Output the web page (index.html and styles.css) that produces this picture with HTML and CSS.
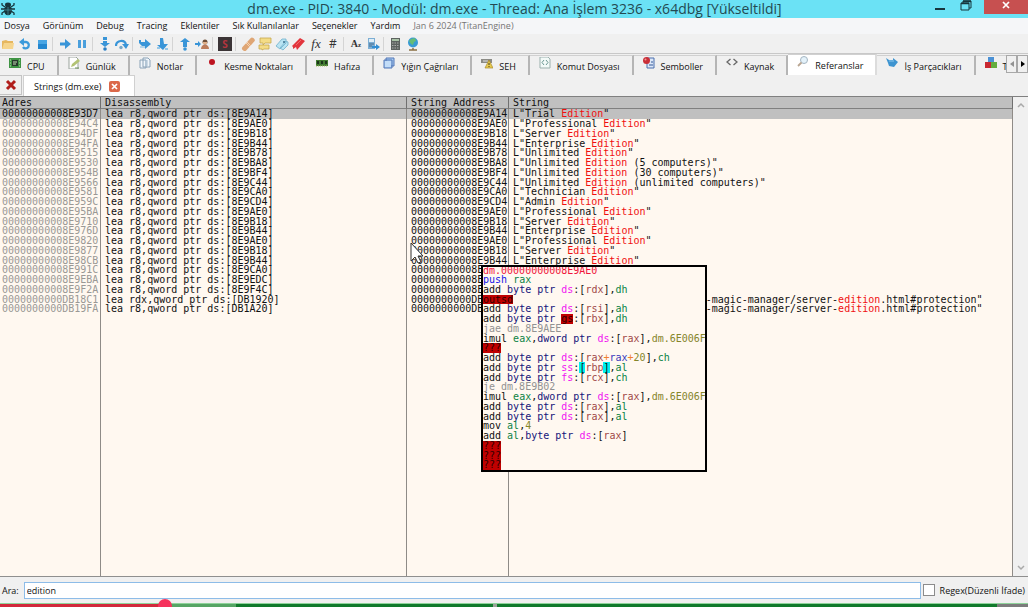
FILE: index.html
```
<!DOCTYPE html>
<html lang="tr">

<head>
    <meta charset="UTF-8">
    <meta name="viewport" content="width=device-width, initial-scale=1.0">
    <title>x64dbg</title>
    <link rel="stylesheet" href="styles.css">
</head>

<body>

    <!-- Title bar -->
    <header class="titlebar">
        <svg class="bug" viewBox="0 0 16 14"><g fill="none" stroke="#17363d" stroke-width="1.3"><path d="M5 5L2 3V1M11 5l3-2V1M5 7H1M11 7h4M5 9l-3 2v2M11 9l3 2v2"/></g><ellipse cx="8" cy="3" rx="3" ry="2.4" fill="#17363d"/><ellipse cx="8" cy="8.5" rx="4" ry="4.8" fill="#17363d"/><path d="M8 5v8M4 8h8" stroke="#4b96a5" stroke-width=".7"/></svg>
        <h1>dm.exe - PID: 3840 - Modül: dm.exe - Thread: Ana İşlem 3236 - x64dbg [Yükseltildi]</h1>
        <div class="window-buttons">
            <button aria-label="Simge durumuna küçült"><svg width="12" height="12"><path d="M1 9h10" stroke="#17363d" stroke-width="2"/></svg></button>
            <button aria-label="Geri yükle"><svg width="12" height="12"><path d="M3 3V1h8v7H9M3 1h8" fill="none" stroke="#17363d"/><path d="M1 3h8v7H1z" fill="none" stroke="#17363d"/><path d="M1 3.5h8M3 1.5h8" stroke="#17363d" stroke-width="1.5"/></svg></button>
            <button class="close" aria-label="Kapat"><svg width="10" height="10"><path d="M2 2l6 6M8 2L2 8" stroke="#fff" stroke-width="1.7"/></svg></button>
        </div>
    </header>

    <nav class="menubar">
        <button>Dosya</button>
        <button>Görünüm</button>
        <button>Debug</button>
        <button>Tracing</button>
        <button>Eklentiler</button>
        <button>Sık Kullanılanlar</button>
        <button>Seçenekler</button>
        <button>Yardım</button>
        <span>Jan 6 2024 (TitanEngine)</span>
    </nav>

    <!-- Toolbar -->
    <div class="toolbar">
        <button aria-label="Aç"><svg viewBox="0 0 14 14"><path d="M1 12V4l4-1 2 1h5v8z" fill="#e6b75f"/><path d="M1 12l2-6h10l-1 6z" fill="#f6d58c"/></svg></button>
        <button aria-label="Yeniden başlat"><svg viewBox="0 0 14 14"><path d="M4 5h4a3.2 3.2 0 1 1-3 5" fill="none" stroke="#3b9adb" stroke-width="2.4"/><path d="M1 5l5-4v8z" fill="#3b9adb"/></svg></button>
        <button aria-label="Durdur"><svg viewBox="0 0 14 14"><path d="M3 3h9v9H3z" fill="#2487cf"/><path d="M3 3h9v4H3z" fill="#48a5e3"/></svg></button>
        <i></i>
        <button aria-label="Çalıştır"><svg viewBox="0 0 14 14"><path d="M2 5.500h5V2l6 5-6 5V8.500H2z" fill="#3995d8"/></svg></button>
        <button aria-label="Duraklat"><svg viewBox="0 0 14 14"><path d="M3 3h3v8H3zM8 3h3v8H8z" fill="#4a9fdc"/></svg></button>
        <i></i>
        <button aria-label="İçine gir"><svg viewBox="0 0 14 14"><path d="M5 0h4v3H5zM5 4h4v2h3l-5 4-5-4h3z" fill="#3995d8"/><circle cx="7" cy="12" r="1.800" fill="#2a7fc4"/></svg></button>
        <button aria-label="Üzerinden geç"><svg viewBox="0 0 14 14"><path d="M1 9c0-6 9-7 10-1" fill="none" stroke="#3995d8" stroke-width="2.200"/><path d="M7 7h7l-3 5z" fill="#3995d8"/><circle cx="6" cy="10.500" r="1.700" fill="#78a8c8"/></svg></button>
        <i></i>
        <button aria-label="İz içine"><svg viewBox="0 0 14 14"><path d="M1 3h2v2h4V2l6 5-6 5V9H4L1 6z" fill="#3995d8"/><path d="M2 10h5" stroke="#78b8e4"/></svg></button>
        <button aria-label="İz üzerinden"><svg viewBox="0 0 14 14"><path d="M5 1h3l1 6h4l-5 6-6-5h3z" fill="#3995d8"/><path d="M2 11h3M10 12h3" stroke="#78b8e4" stroke-width="1.500"/></svg></button>
        <i></i>
        <button aria-label="Dönüşe kadar"><svg viewBox="0 0 14 14"><path d="M7 1l5 4H9v5H5V5H2z" fill="#3995d8"/><circle cx="7" cy="12" r="1.800" fill="#3995d8"/></svg></button>
        <button aria-label="Kullanıcı koduna"><svg viewBox="0 0 14 14"><path d="M0 6h3V4l3 3-3 3V8H0z" fill="#3995d8"/><circle cx="10" cy="5" r="2.500" fill="#6d4d37"/><path d="M8 5h4v2H8z" fill="#e0af87"/><path d="M6 12c0-6 8-6 8 0z" fill="#bd7c5a"/></svg></button>
        <i></i>
        <button class="scylla" aria-label="Scylla">S</button>
        <i></i>
        <button aria-label="Yamalar"><svg viewBox="0 0 14 14"><rect x="-1" y="5" width="16" height="5" rx="2" transform="rotate(-48 7 7)" fill="#dfa675"/><path d="M5 6l4 4M6 5l4 4" stroke="#f5d2b0"/></svg></button>
        <button aria-label="Yorumlar"><svg viewBox="0 0 14 14"><path d="M2 1h11v5H7L5 8V6H2zM1 8h10v4H6l-2 1v-1H1z" fill="#f4dc86" stroke="#c7a74f" stroke-width=".8"/></svg></button>
        <button aria-label="Etiketler"><svg viewBox="0 0 14 14"><path d="M1 9l6-7h4v4l-6 6zM5 11l6-7 2 1v3l-5 5z" fill="#b9e4f3" stroke="#6fb0cb" stroke-width=".8"/><circle cx="9" cy="5" r="1" fill="#3a6f8c"/></svg></button>
        <button aria-label="Yer imleri"><svg viewBox="0 0 14 14"><path d="M0 9l8-8 5 3-8 9-1-3-3 2v-2z" fill="#e2353d"/><path d="M4 8l5-5" stroke="#f06a6a"/></svg></button>
        <button class="fx" aria-label="Fonksiyonlar">fx</button>
        <button class="hash" aria-label="Değişkenler">#</button>
        <i></i>
        <button class="az" aria-label="Dizeler">A<small>z</small></button>
        <button aria-label="Modüller arası çağrılar"><svg viewBox="0 0 14 14"><path d="M2 1h7v11H2z" fill="#7caed4"/><path d="M3 2h5v3H3z" fill="#deedf7"/><path d="M3 7h5M3 9h3" stroke="#466c8e"/><path d="M6 9h4V7l4 3-4 3v-2H6z" fill="#328ed3"/></svg></button>
        <i></i>
        <button aria-label="Hesap makinesi"><svg viewBox="0 0 14 14"><path d="M2 1h9v12H2z" fill="#5c625f"/><path d="M3 2h7v2H3z" fill="#a8c1a5"/><path d="M3 6h7M3 8.500h7M3 11h7" stroke="#aaa" stroke-dasharray="1.500 1"/></svg></button>
        <button aria-label="Güncelle"><svg viewBox="0 0 14 14"><circle cx="7" cy="5.500" r="5" fill="#399bd4"/><path d="M5 2l4-1 1 3-2 1-1 3-2-1-2-3z" fill="#65bd77"/><path d="M7 11v2M3 13h8" stroke="#8b7044" stroke-width="1.500"/></svg></button>
    </div>

    <!-- View tabs -->
    <div class="tabs" role="tablist">
        <button class="tab" role="tab"><svg viewBox="0 0 12 12"><path d="M0 1h12v10H0z" fill="#3f9444"/><path d="M3 3h6v6H3z" fill="#26382b"/><path d="M1 3h1M1 6h1M1 9h1M10 3h1M10 6h1M10 9h1M4 5h4M4 7h3" stroke="#c6dfb8"/></svg>CPU</button>
        <button class="tab" role="tab"><svg viewBox="0 0 12 12"><path d="M1 0h7l2 2v10H1z" fill="#fff" stroke="#9ba49d"/><path d="M3 10l1-3 6-5 2 2-6 5z" fill="#b3c374"/><path d="M7 11h4" stroke="#6b8e54"/></svg>Günlük</button>
        <button class="tab" role="tab"><svg viewBox="0 0 12 12"><path d="M1 3h6v8H1zM4 1h5l2 2v7H4z" fill="#f1f6fb" stroke="#8aa2b7"/><path d="M6 4h3M6 6h3M6 8h3" stroke="#a8bfd2"/></svg>Notlar</button>
        <button class="tab" role="tab"><svg viewBox="0 0 12 12"><circle cx="6" cy="5" r="3" fill="#bd1420"/></svg>Kesme Noktaları</button>
        <button class="tab" role="tab"><svg viewBox="0 0 12 12"><path d="M0 3h12v6H0z" fill="#417b32"/><path d="M1 4h2v3H1zM5 4h2v3H5zM9 4h2v3H9z" fill="#1c351a"/><path d="M0 9h12" stroke="#a7ba63" stroke-dasharray="1 1"/></svg>Hafıza</button>
        <button class="tab" role="tab"><svg viewBox="0 0 12 12"><path d="M3 1h8v8H3zM1 3h8v8H1z" fill="#a8ccf2" stroke="#5376b6"/><path d="M2 4h6v6H2z" fill="#c3ddf8"/></svg>Yığın Çağrıları</button>
        <button class="tab" role="tab"><svg viewBox="0 0 12 12"><path d="M0 2h11v4H0z" fill="#8b8b85"/><path d="M2 4h5" stroke="#ddd"/><path d="M8 3l4 8H4z" fill="#e7ca4d" stroke="#a98a2c" stroke-width=".7"/><path d="M8 6v2M8 9v1" stroke="#4b401c"/></svg>SEH</button>
        <button class="tab" role="tab"><svg viewBox="0 0 12 12"><path d="M1 0h8l2 2v9H1z" fill="#f3faf8" stroke="#9bb0ad"/><path d="M5 3L3 5.500 5 8M7 3l2 2.500L7 8" fill="none" stroke="#6c9893"/></svg>Komut Dosyası</button>
        <button class="tab" role="tab"><svg viewBox="0 0 12 12"><path d="M4 1h7v10H4z" fill="#dce7f8" stroke="#4b6fad"/><path d="M6 8h4M8 5h2" stroke="#335998"/><circle cx="3.500" cy="3.500" r="3.500" fill="#c92e37"/><circle cx="2.500" cy="2.500" r="1" fill="#ed9696"/></svg>Semboller</button>
        <button class="tab" role="tab"><svg viewBox="0 0 12 12"><path d="M4.500 2L1 5l3.500 3M7.500 2L11 5 7.500 8" fill="none" stroke="#686868" stroke-width="1.300"/></svg>Kaynak</button>
        <button class="tab active" role="tab" aria-selected="true"><svg viewBox="0 0 12 12"><circle cx="7" cy="4" r="3.500" fill="#e4f2fa" stroke="#a4b5c2"/><path d="M4.500 6.500L1 10" stroke="#b9a591" stroke-width="1.800"/></svg>Referanslar</button>
        <button class="tab" role="tab"><svg viewBox="0 0 12 12"><path d="M0 1l3 2h4V1l5 4-4 5-5-1-1-3z" fill="#3e94d0"/><path d="M3 4h5" stroke="#8cc8ee"/></svg>İş Parçacıkları</button>
        <button class="tab last" role="tab"><svg viewBox="0 0 12 12"><path d="M3 0h6v5H3z" fill="#4c91d5"/><path d="M0 5h6v6H0z" fill="#c92931"/><path d="M6 5h6v6H6z" fill="#65ad3e"/></svg>T</button>
        <div class="tab-scroll">
            <button aria-label="Önceki sekmeler"><svg width="6" height="8"><path d="M5 1v6L1 4z" fill="#929292"/></svg></button>
            <button aria-label="Sonraki sekmeler"><svg width="6" height="8"><path d="M1 1v6l4-3z" fill="#000"/></svg></button>
        </div>
    </div>

    <div class="subtabs">
        <button class="close-all" aria-label="Tümünü kapat"><svg width="12" height="12"><path d="M2 2l8 8M10 2l-8 8" stroke="#b01e1b" stroke-width="3"/></svg></button>
        <div class="subtab">Strings (dm.exe)
            <button aria-label="Sekmeyi kapat"><svg width="7" height="7"><path d="M1 1l5 5M6 1L1 6" stroke="#fff" stroke-width="1.700"/></svg></button>
        </div>
    </div>

    <!-- String references -->
    <main class="references">
        <table class="strings">
            <colgroup><col class="col-address"><col class="col-disasm"><col class="col-string-address"><col></colgroup>
            <thead>
                <tr><th>Adres</th><th>Disassembly</th><th>String Address</th><th>String</th></tr>
            </thead>
            <tbody>
                <tr class="selected"><td>00000000008E93D7</td><td>lea r8,qword ptr ds:[8E9A14]</td><td>00000000008E9A14</td><td>L"Trial <mark>Edition</mark>"</td></tr>
                <tr><td>00000000008E94C4</td><td>lea r8,qword ptr ds:[8E9AE0]</td><td>00000000008E9AE0</td><td>L"Professional <mark>Edition</mark>"</td></tr>
                <tr><td>00000000008E94DF</td><td>lea r8,qword ptr ds:[8E9B18]</td><td>00000000008E9B18</td><td>L"Server <mark>Edition</mark>"</td></tr>
                <tr><td>00000000008E94FA</td><td>lea r8,qword ptr ds:[8E9B44]</td><td>00000000008E9B44</td><td>L"Enterprise <mark>Edition</mark>"</td></tr>
                <tr><td>00000000008E9515</td><td>lea r8,qword ptr ds:[8E9B78]</td><td>00000000008E9B78</td><td>L"Unlimited <mark>Edition</mark>"</td></tr>
                <tr><td>00000000008E9530</td><td>lea r8,qword ptr ds:[8E9BA8]</td><td>00000000008E9BA8</td><td>L"Unlimited <mark>Edition</mark> (5 computers)"</td></tr>
                <tr><td>00000000008E954B</td><td>lea r8,qword ptr ds:[8E9BF4]</td><td>00000000008E9BF4</td><td>L"Unlimited <mark>Edition</mark> (30 computers)"</td></tr>
                <tr><td>00000000008E9566</td><td>lea r8,qword ptr ds:[8E9C44]</td><td>00000000008E9C44</td><td>L"Unlimited <mark>Edition</mark> (unlimited computers)"</td></tr>
                <tr><td>00000000008E9581</td><td>lea r8,qword ptr ds:[8E9CA0]</td><td>00000000008E9CA0</td><td>L"Technician <mark>Edition</mark>"</td></tr>
                <tr><td>00000000008E959C</td><td>lea r8,qword ptr ds:[8E9CD4]</td><td>00000000008E9CD4</td><td>L"Admin <mark>Edition</mark>"</td></tr>
                <tr><td>00000000008E95BA</td><td>lea r8,qword ptr ds:[8E9AE0]</td><td>00000000008E9AE0</td><td>L"Professional <mark>Edition</mark>"</td></tr>
                <tr><td>00000000008E9710</td><td>lea r8,qword ptr ds:[8E9B18]</td><td>00000000008E9B18</td><td>L"Server <mark>Edition</mark>"</td></tr>
                <tr><td>00000000008E976D</td><td>lea r8,qword ptr ds:[8E9B44]</td><td>00000000008E9B44</td><td>L"Enterprise <mark>Edition</mark>"</td></tr>
                <tr><td>00000000008E9820</td><td>lea r8,qword ptr ds:[8E9AE0]</td><td>00000000008E9AE0</td><td>L"Professional <mark>Edition</mark>"</td></tr>
                <tr><td>00000000008E9877</td><td>lea r8,qword ptr ds:[8E9B18]</td><td>00000000008E9B18</td><td>L"Server <mark>Edition</mark>"</td></tr>
                <tr><td>00000000008E98CB</td><td>lea r8,qword ptr ds:[8E9B44]</td><td>00000000008E9B44</td><td>L"Enterprise <mark>Edition</mark>"</td></tr>
                <tr><td>00000000008E991C</td><td>lea r8,qword ptr ds:[8E9CA0]</td><td>00000000008E9CA0</td><td></td></tr>
                <tr><td>00000000008E9EBA</td><td>lea r8,qword ptr ds:[8E9EDC]</td><td>00000000008E9EDC</td><td></td></tr>
                <tr><td>00000000008E9F2A</td><td>lea r8,qword ptr ds:[8E9F4C]</td><td>00000000008E9F4C</td><td></td></tr>
                <tr><td>0000000000DB18C1</td><td>lea rdx,qword ptr ds:[DB1920]</td><td>0000000000DB1920</td><td>L"https://www.disk-partition.com-magic-manager/server-<mark>edition</mark>.html#protection"</td></tr>
                <tr><td>0000000000DB19FA</td><td>lea r8,qword ptr ds:[DB1A20]</td><td>0000000000DB1A20</td><td>L"https://www.disk-partition.com-magic-manager/server-<mark>edition</mark>.html#protection"</td></tr>
                <tr class="filler"><td></td><td></td><td></td><td></td></tr>
            </tbody>
        </table>
        <div class="scrollbar">
            <svg width="8" height="6"><path d="M1 5l3-3 3 3" fill="none" stroke="#a9a9a9" stroke-width="1.500"/></svg>
            <svg width="8" height="6"><path d="M1 1l3 3 3-3" fill="none" stroke="#a9a9a9" stroke-width="1.500"/></svg>
        </div>

        <!-- Disassembly preview -->
        <div class="preview">
            <div><span class="label">dm.00000000008E9AE0</span></div>
            <div><span class="stack">push</span> <span class="reg">rax</span></div>
            <div>add <b>byte ptr</b> <span class="seg">ds</span>:[<span class="base">rdx</span>],<span class="reg">dh</span></div>
            <div><span class="bad">outsd</span></div>
            <div>add <b>byte ptr</b> <span class="seg">ds</span>:[<span class="base">rsi</span>],<span class="reg">ah</span></div>
            <div>add <b>byte ptr</b> <span class="bad">gs</span>:[<span class="base">rbx</span>],<span class="reg">dh</span></div>
            <div><span class="jump">jae dm.8E9AEE</span></div>
            <div>imul <span class="reg">eax</span>,<b>dword ptr</b> <span class="seg">ds</span>:[<span class="base">rax</span>],<span class="value">dm.6E006F</span></div>
            <div><span class="bad">???</span></div>
            <div>add <b>byte ptr</b> <span class="seg">ds</span>:[<span class="base">rax</span><span class="plus">+</span><span class="index">rax</span><span class="plus">+</span><span class="value">20</span>],<span class="reg">ch</span></div>
            <div>add <b>byte ptr</b> <span class="seg">ss</span>:<span class="bracket">[</span><span class="base">rbp</span><span class="bracket">]</span>,<span class="reg">al</span></div>
            <div>add <b>byte ptr</b> <span class="seg">fs</span>:[<span class="base">rcx</span>],<span class="reg">ch</span></div>
            <div><span class="jump">je dm.8E9B02</span></div>
            <div>imul <span class="reg">eax</span>,<b>dword ptr</b> <span class="seg">ds</span>:[<span class="base">rax</span>],<span class="value">dm.6E006F</span></div>
            <div>add <b>byte ptr</b> <span class="seg">ds</span>:[<span class="base">rax</span>],<span class="reg">al</span></div>
            <div>add <b>byte ptr</b> <span class="seg">ds</span>:[<span class="base">rax</span>],<span class="reg">al</span></div>
            <div>mov <span class="reg">al</span>,<span class="value">4</span></div>
            <div>add <span class="reg">al</span>,<b>byte ptr</b> <span class="seg">ds</span>:[<span class="base">rax</span>]</div>
            <div><span class="bad">???</span></div>
            <div><span class="bad">???</span></div>
            <div><span class="bad">???</span></div>
        </div>

        <svg class="cursor" viewBox="0 0 14 22"><path d="M1 1v18l4-4 3 6 3-1-3-6h5z" fill="#fff" stroke="#333"/></svg>
    </main>

    <form class="search">
        <label for="search">Ara:</label>
        <input type="text" id="search" value="edition" autofocus>
        <input type="checkbox" id="regex">
        <label for="regex">Regex(Düzenli İfade)</label>
    </form>

    <!-- Playback strip along the bottom edge -->
    <footer class="strip">
        <div class="played"></div>
        <div class="buffered"></div>
        <div class="rest"></div>
        <div class="chapter"></div>
        <div class="rest"></div>
        <div class="clock"></div>
        <span class="knob"></span>
    </footer>

</body>

</html>
```
FILE: styles.css
```
* {
    box-sizing: border-box;
}

body {
    margin: 0;
    height: 100vh;
    display: flex;
    flex-direction: column;
    overflow: hidden;
    font-family: "Open Sans", sans-serif;
    font-size: 9px;
    color: #111;
    background-color: #f0f0f0;
}

button {
    margin: 0;
    padding: 0;
    border: none;
    background: none;
    font: inherit;
    color: inherit;
}

svg {
    display: block;
    flex: none;
}

.titlebar {
    display: flex;
    align-items: center;
    height: 18px;
    background-color: #6be2f5;
}

.bug {
    width: 16px;
    height: 14px;
}

.titlebar h1 {
    flex: 1;
    margin: 0;
    padding-left: 86px;
    text-align: center;
    font-size: 14px;
    line-height: 16px;
    font-weight: normal;
    color: #244a52;
    white-space: nowrap;
}

.window-buttons {
    display: flex;
    align-self: flex-start;
}

.window-buttons button {
    display: flex;
    justify-content: center;
    width: 26px;
    height: 14px;
}

.window-buttons .close {
    width: 44px;
    margin-left: 5px;
    background-color: #c75050;
}

.menubar {
    display: flex;
    gap: 13px;
    padding-left: 4px;
    height: 16px;
    line-height: 16px;
    background-color: #f5f6f8;
}

.menubar span {
    color: #757575;
}

.toolbar {
    display: flex;
    align-items: center;
    gap: 3px;
    height: 20px;
    padding-left: 1px;
    border-bottom: 1px solid #c8c8c8;
}

.toolbar button {
    width: 14px;
    height: 14px;
    line-height: 14px;
    color: #333;
}

.toolbar i {
    width: 3px;
    height: 14px;
    border-left: 1px solid #d4d4d4;
}

.toolbar .scylla {
    background-color: #3b3436;
    color: #b4343e;
    font-size: 10px;
    font-weight: bold;
}

.toolbar .fx {
    font-family: "Liberation Serif", serif;
    font-size: 13px;
    font-style: italic;
}

.toolbar .hash {
    font-size: 12px;
}

.toolbar .az {
    font-family: "Liberation Serif", serif;
    font-size: 10px;
    font-weight: bold;
}

.az small {
    font-size: 7px;
}

.tabs {
    display: flex;
    height: 21px;
    overflow: hidden;
}

.tab {
    display: flex;
    flex: none;
    align-items: center;
    gap: 6px;
    height: 20px;
    margin-top: 1px;
    padding: 1px 12px 0 9px;
    border-top: 1px solid #d0d0d0;
    border-right: 2px solid #b5b5b5;
    white-space: nowrap;
}

.tab svg {
    width: 12px;
    height: 12px;
    align-self: flex-start;
}

.tab.active {
    margin: 0;
    height: 21px;
    background-color: #fff;
    border-right-color: #dcdcdc;
}

.tab.last {
    flex: 1 1 0;
    min-width: 0;
    justify-content: flex-start;
    padding-right: 0;
    border-right: none;
}

.tab-scroll {
    display: flex;
    flex: none;
}

.tab-scroll button {
    display: flex;
    align-items: center;
    justify-content: center;
    width: 11px;
    height: 18px;
    margin-top: 1px;
    border: 1px solid #a8a8a8;
    background-color: #f0f0f0;
}

.subtabs {
    display: flex;
    height: 21px;
}

.close-all {
    display: flex;
    align-items: center;
    justify-content: center;
    width: 22px;
    height: 20px;
    margin-right: 1px;
    border: 1px solid #c4c4c4;
    border-left: none;
}

.subtab {
    display: flex;
    align-items: center;
    gap: 8px;
    padding: 0 14px 0 10px;
    border: 1px solid #d0d0d0;
    border-bottom: none;
    background-color: #fff;
}

.subtab button {
    display: flex;
    align-items: center;
    justify-content: center;
    width: 11px;
    height: 11px;
    border-radius: 2px;
    background-color: #db6849;
}

.references {
    position: relative;
    display: flex;
    flex: 1;
    min-height: 0;
    border-top: 1px solid #808080;
    border-bottom: 1px solid #8f8f8f;
    background-color: #fff8f0;
    font-family: "DejaVu Sans Mono", monospace;
    font-size: 10px;
}

.strings {
    flex: 1;
    width: 100%;
    height: 100%;
    table-layout: fixed;
    border-collapse: separate;
    border-spacing: 0;
}

.col-address {
    width: 101px;
}

.col-disasm {
    width: 306px;
}

.col-string-address {
    width: 102px;
}

.strings th,
.strings td {
    height: 10px;
    padding: 0 0 0 4px;
    line-height: 10px;
    text-align: left;
    white-space: nowrap;
    border-right: 1px solid #8f8b87;
}

/* rows average a little under 10px */
.strings tr:nth-child(4n) td,
.preview div:nth-child(4n) {
    height: 9px;
    line-height: 9px;
}

.strings th {
    height: 12px;
    font-weight: normal;
    background-color: #c0c0c0;
    border-bottom: 1px solid #808080;
    border-right-color: #707070;
}

.strings th:first-child,
.strings td:first-child {
    padding-left: 2px;
}

.strings td:first-child {
    color: #9a9895;
}

.strings .selected td {
    background-color: #c0c0c0;
}

.strings .selected td:first-child {
    color: #111;
}

.strings .filler td {
    height: auto;
}

mark {
    background: none;
    color: #f01010;
}

.scrollbar {
    display: flex;
    flex-direction: column;
    justify-content: space-between;
    align-items: center;
    width: 15px;
    padding: 5px 0;
    background-color: #f0f0f0;
}

.preview {
    position: absolute;
    left: 481px;
    top: 168px;
    width: 226px;
    border: 2px solid #000;
    background-color: #fff8f0;
    overflow: hidden;
}

.preview div {
    height: 10px;
    line-height: 10px;
    white-space: nowrap;
}

.preview div:first-child {
    height: 8px;
    line-height: 8px;
}

.preview b {
    font-weight: normal;
    color: #15157a;
}

.label {
    color: #f0143c;
}

.stack {
    color: #1414e6;
}

.reg {
    color: #0b8345;
}

.seg {
    color: #f014f0;
}

.base {
    color: #a04848;
}

.index {
    color: #3838bc;
}

.plus {
    color: #f08030;
}

.value {
    color: #85852a;
}

.jump {
    color: #929292;
}

.bad {
    display: inline-block;
    background-color: #c00000;
    color: #300000;
}

.bracket {
    background-color: #00f0f0;
}

.cursor {
    position: absolute;
    left: 410px;
    top: 145px;
    width: 14px;
    height: 22px;
}

.search {
    display: flex;
    align-items: center;
    height: 26px;
    padding: 0 3px 0 2px;
    white-space: nowrap;
}

.search input[type="text"] {
    flex: 1;
    min-width: 0;
    height: 17px;
    margin: 0 2px 0 5px;
    padding: 0 2px;
    border: 1px solid #8dbce8;
    outline: none;
    font: inherit;
    color: inherit;
    background-color: #fff;
}

.search input[type="checkbox"] {
    appearance: none;
    width: 12px;
    height: 12px;
    margin: 0 5px 0 0;
    border: 1px solid #8c8c8c;
    background-color: #fff;
}

.strip {
    position: relative;
    display: flex;
    height: 4px;
    border-top: 1px solid #8ed39a;
}

.played {
    width: 16%;
    background-color: #d2283c;
}

.buffered {
    width: 7%;
    background-color: #56a565;
}

.rest {
    flex: 1;
    background-color: #117a2c;
}

.buffered + .rest {
    flex: none;
    width: 25%;
}

.chapter {
    width: 4px;
    background-color: #9aa39a;
}

.clock {
    width: 3%;
    background-color: #7c7c7c;
}

.knob {
    position: absolute;
    left: 16%;
    top: -5px;
    width: 14px;
    height: 14px;
    margin-left: -6px;
    border-radius: 7px;
    background-color: #f5325c;
}
```
